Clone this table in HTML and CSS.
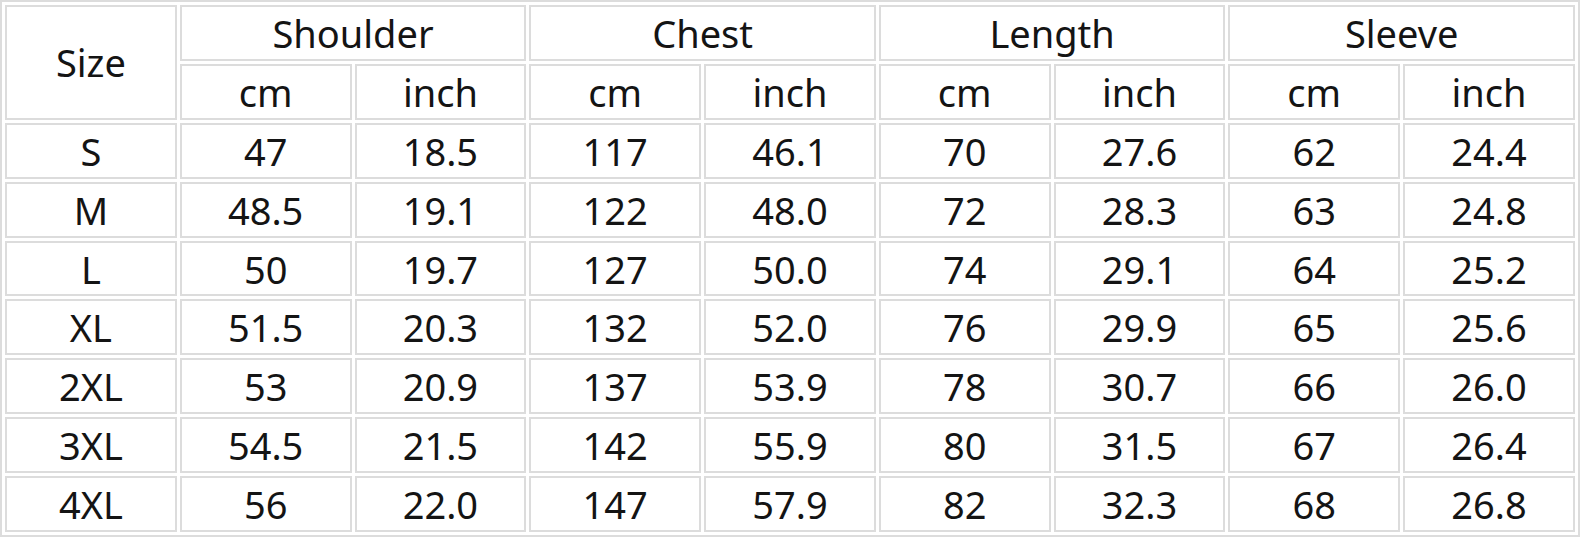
FILE: index.html
```html
<!DOCTYPE html>
<html>
<head>
<meta charset="utf-8">
<link rel="stylesheet" href="styles.css">
</head>
<body>
<table class="size-table">
  <thead>
    <tr>
      <th rowspan="2">Size</th>
      <th colspan="2">Shoulder</th>
      <th colspan="2">Chest</th>
      <th colspan="2">Length</th>
      <th colspan="2">Sleeve</th>
    </tr>
    <tr>
      <th>cm</th><th>inch</th>
      <th>cm</th><th>inch</th>
      <th>cm</th><th>inch</th>
      <th>cm</th><th>inch</th>
    </tr>
  </thead>
  <tbody>
    <tr><td>S</td><td>47</td><td>18.5</td><td>117</td><td>46.1</td><td>70</td><td>27.6</td><td>62</td><td>24.4</td></tr>
    <tr><td>M</td><td>48.5</td><td>19.1</td><td>122</td><td>48.0</td><td>72</td><td>28.3</td><td>63</td><td>24.8</td></tr>
    <tr><td>L</td><td>50</td><td>19.7</td><td>127</td><td>50.0</td><td>74</td><td>29.1</td><td>64</td><td>25.2</td></tr>
    <tr><td>XL</td><td>51.5</td><td>20.3</td><td>132</td><td>52.0</td><td>76</td><td>29.9</td><td>65</td><td>25.6</td></tr>
    <tr><td>2XL</td><td>53</td><td>20.9</td><td>137</td><td>53.9</td><td>78</td><td>30.7</td><td>66</td><td>26.0</td></tr>
    <tr><td>3XL</td><td>54.5</td><td>21.5</td><td>142</td><td>55.9</td><td>80</td><td>31.5</td><td>67</td><td>26.4</td></tr>
    <tr><td>4XL</td><td>56</td><td>22.0</td><td>147</td><td>57.9</td><td>82</td><td>32.3</td><td>68</td><td>26.8</td></tr>
  </tbody>
</table>
</body>
</html>
```
FILE: styles.css
```css
html, body {
  margin: 0;
  padding: 0;
  background: #ffffff;
}

.size-table {
  width: 1580px;
  border: 2px solid #dcdcdc;
  border-collapse: separate;
  border-spacing: 3px;
  table-layout: fixed;
  font-family: "Noto Sans", "Open Sans", Arial, sans-serif;
  font-size: 38px;
  color: #141414;
}

.size-table tr {
  height: 55.9px;
}

.size-table th,
.size-table td {
  border: 2px solid #dcdcdc;
  text-align: center;
  vertical-align: middle;
  font-weight: normal;
  padding: 0;
  line-height: 1;
}
```
